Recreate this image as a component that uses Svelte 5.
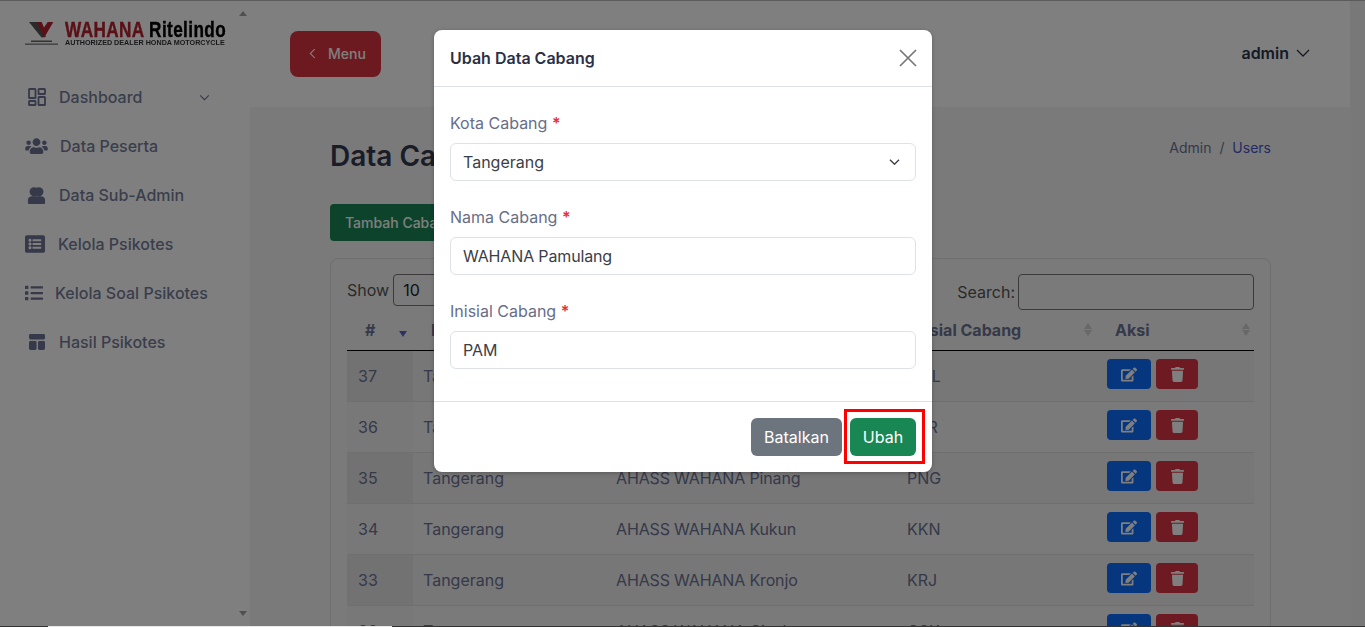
<script>
  const menu = [
    { label: 'Dashboard', icon: 'dash', gap: 'g1' },
    { label: 'Data Peserta', icon: 'users', gap: 'g2' },
    { label: 'Data Sub-Admin', icon: 'sub', gap: 'g1' },
    { label: 'Kelola Psikotes', icon: 'alt', gap: 'g3' },
    { label: 'Kelola Soal Psikotes', icon: 'list', gap: 'g4' },
    { label: 'Hasil Psikotes', icon: 'table', gap: 'g1' }
  ];
  const rows = [
    [37, 'Tangerang', 'AHASS WAHANA Pamulang', 'PML'],
    [36, 'Tangerang', 'AHASS WAHANA Serpong', 'SPR'],
    [35, 'Tangerang', 'AHASS WAHANA Pinang', 'PNG'],
    [34, 'Tangerang', 'AHASS WAHANA Kukun', 'KKN'],
    [33, 'Tangerang', 'AHASS WAHANA Kronjo', 'KRJ'],
    [32, 'Tangerang', 'AHASS WAHANA Cisoka', 'CSK']
  ];
  const heads = ['#', 'Kota Cabang', 'Nama Cabang', 'Inisial Cabang', 'Aksi'];
</script>

<div class="page">
  <aside class="sidebar">
    <div class="side-inner">
      <div class="logo">
        <svg class="logo-mark" viewBox="0 0 33 25" aria-hidden="true">
          <path d="M4 1h9l8 15-4.500 .5z" fill="#555" />
          <path d="M11.700 1h5l2.300 5.500 3.700-5.500h5.600l-9 15.500z" fill="#b3202c" />
          <rect x="6" y="19.500" width="21" height="1.500" fill="#666" />
          <rect x="0" y="22.500" width="33" height="1.300" fill="#777" />
        </svg>
        <div class="logo-text">
          <div class="logo-name"><span class="red">WAHANA</span> <span>Ritelindo</span></div>
          <div class="logo-sub">AUTHORIZED DEALER HONDA MOTORCYCLE</div>
        </div>
      </div>
      <nav class="menu">
        {#each menu as m}
          <div class="item {m.gap}">
            <span class="ico">
              {#if m.icon === 'dash'}
                <svg viewBox="0 0 18 18" width="18" height="18" fill="none" stroke="currentColor" stroke-width="1.800"><rect x="1" y="1" width="6.500" height="9" rx=".6"/><rect x="10.500" y="1" width="6.500" height="5" rx=".6"/><rect x="1" y="13" width="6.500" height="4" rx=".6"/><rect x="10.500" y="9" width="6.500" height="8" rx=".6"/></svg>
              {:else if m.icon === 'users'}
                <svg viewBox="0 0 640 512" width="23" height="18" fill="currentColor"><path d="M96 224c35.3 0 64-28.7 64-64s-28.7-64-64-64-64 28.7-64 64 28.7 64 64 64zm448 0c35.3 0 64-28.7 64-64s-28.7-64-64-64-64 28.7-64 64 28.7 64 64 64zm32 32h-64c-17.6 0-33.5 7.1-45.1 18.6 40.3 22.1 68.9 62 75.1 109.4h66c17.7 0 32-14.3 32-32v-32c0-35.3-28.7-64-64-64zm-256 0c61.9 0 112-50.1 112-112S381.9 32 320 32 208 82.1 208 144s50.1 112 112 112zm76.8 32h-8.3c-20.8 10-43.9 16-68.5 16s-47.6-6-68.5-16h-8.3C179.6 288 128 339.6 128 403.2V432c0 26.5 21.5 48 48 48h288c26.5 0 48-21.5 48-48v-28.8c0-63.6-51.6-115.2-115.2-115.2zm-223.7-13.4C161.5 263.1 145.6 256 128 256H64c-35.3 0-64 28.7-64 64v32c0 17.7 14.3 32 32 32h65.9c6.3-47.4 34.9-87.3 75.2-109.4z"/></svg>
              {:else if m.icon === 'sub'}
                <svg viewBox="0 0 20 20" width="19" height="19" fill="currentColor"><circle cx="7.500" cy="6" r="4.800"/><circle cx="12.500" cy="6" r="4.800"/><path d="M1 18v-3.500c0-2.400 2-3.800 4.400-3.800h9.200c2.400 0 4.400 1.400 4.400 3.800v3.500c0 .6-.4 1-1 1H2c-.6 0-1-.4-1-1z"/></svg>
              {:else if m.icon === 'alt'}
                <svg viewBox="0 0 512 512" width="20" height="20" fill="currentColor"><path d="M464 480H48c-26.51 0-48-21.49-48-48V80c0-26.51 21.49-48 48-48h416c26.51 0 48 21.49 48 48v352c0 26.51-21.49 48-48 48zM128 120c-22.091 0-40 17.909-40 40s17.909 40 40 40 40-17.909 40-40-17.909-40-40-40zm0 96c-22.091 0-40 17.909-40 40s17.909 40 40 40 40-17.909 40-40-17.909-40-40-40zm0 96c-22.091 0-40 17.909-40 40s17.909 40 40 40 40-17.909 40-40-17.909-40-40-40zm288-136v-32c0-6.627-5.373-12-12-12H204c-6.627 0-12 5.373-12 12v32c0 6.627 5.373 12 12 12h200c6.627 0 12-5.373 12-12zm0 96v-32c0-6.627-5.373-12-12-12H204c-6.627 0-12 5.373-12 12v32c0 6.627 5.373 12 12 12h200c6.627 0 12-5.373 12-12zm0 96v-32c0-6.627-5.373-12-12-12H204c-6.627 0-12 5.373-12 12v32c0 6.627 5.373 12 12 12h200c6.627 0 12-5.373 12-12z"/></svg>
              {:else if m.icon === 'list'}
                <svg viewBox="0 0 512 512" width="18" height="18" fill="currentColor"><path d="M80 368H16a16 16 0 0 0-16 16v64a16 16 0 0 0 16 16h64a16 16 0 0 0 16-16v-64a16 16 0 0 0-16-16zm0-320H16A16 16 0 0 0 0 64v64a16 16 0 0 0 16 16h64a16 16 0 0 0 16-16V64a16 16 0 0 0-16-16zm0 160H16a16 16 0 0 0-16 16v64a16 16 0 0 0 16 16h64a16 16 0 0 0 16-16v-64a16 16 0 0 0-16-16zm416 176H176a16 16 0 0 0-16 16v32a16 16 0 0 0 16 16h320a16 16 0 0 0 16-16v-32a16 16 0 0 0-16-16zm0-320H176a16 16 0 0 0-16 16v32a16 16 0 0 0 16 16h320a16 16 0 0 0 16-16V80a16 16 0 0 0-16-16zm0 160H176a16 16 0 0 0-16 16v32a16 16 0 0 0 16 16h320a16 16 0 0 0 16-16v-32a16 16 0 0 0-16-16z"/></svg>
              {:else}
                <svg viewBox="0 0 18 18" width="18" height="18" fill="currentColor"><rect x="1" y="1" width="16" height="5.500" rx="1.400"/><rect x="1" y="8" width="7.600" height="9" rx="1.400"/><rect x="10" y="8" width="7" height="9" rx="1.400"/></svg>
              {/if}
            </span>
            <span class="label">{m.label}</span>
            {#if m.icon === 'dash'}
              <svg class="caret" viewBox="0 0 12 8" width="11" height="7" fill="none" stroke="currentColor" stroke-width="1.200"><path d="M1 1.500l5 5 5-5"/></svg>
            {/if}
          </div>
        {/each}
      </nav>
    </div>
    <div class="side-scroll">
      <span class="arrow up"></span>
      <span class="arrow down"></span>
    </div>
  </aside>

  <main class="main">
    <header class="topbar">
      <button class="menu-btn">
        <svg viewBox="0 0 8 12" width="7" height="11" fill="none" stroke="currentColor" stroke-width="1.300"><path d="M6.500 1L1.500 6l5 5"/></svg>
        Menu
      </button>
      <div class="user">
        admin
        <svg viewBox="0 0 14 8" width="14" height="8" fill="none" stroke="currentColor" stroke-width="1.300"><path d="M1 1l6 6 6-6"/></svg>
      </div>
    </header>

    <section class="content">
      <div class="title-row">
        <h1>Data Cabang</h1>
        <div class="crumbs">Admin <span class="sep">/</span> <span class="cur">Users</span></div>
      </div>
      <button class="add-btn">Tambah Cabang</button>
      <div class="card">
        <div class="tools">
          <div class="show">Show <span class="len">10</span></div>
          <div class="search">Search: <span class="search-box"></span></div>
        </div>
        <table>
          <thead>
            <tr>
              {#each heads as h, i}
                <th class="c{i}">
                  {h}
                  <span class="sort">
                    {#if i === 0}
                      <i class="tri-down on"></i>
                    {:else}
                      <i class="tri-up"></i><i class="tri-down"></i>
                    {/if}
                  </span>
                </th>
              {/each}
            </tr>
          </thead>
          <tbody>
            {#each rows as r, i}
              <tr class:odd={i % 2 === 0}>
                <td class="idx">{r[0]}</td>
                <td>{r[1]}</td>
                <td class="tight">{r[2]}</td>
                <td>{r[3]}</td>
                <td>
                  <div class="acts">
                    <span class="act blue">
                      <svg viewBox="0 0 576 512" width="16" height="15" fill="currentColor"><path d="M402.6 83.2l90.2 90.2c3.8 3.8 3.8 10 0 13.8L274.4 405.6l-92.8 10.3c-12.4 1.4-22.9-9.1-21.5-21.5l10.3-92.8L388.8 83.2c3.8-3.8 10-3.8 13.8 0zm162-22.9l-48.8-48.8c-15.2-15.2-39.9-15.2-55.2 0l-35.4 35.4c-3.8 3.8-3.8 10 0 13.8l90.2 90.2c3.8 3.8 10 3.8 13.8 0l35.4-35.4c15.2-15.3 15.2-40 0-55.2zM384 346.2V448H64V128h229.8c3.2 0 6.2-1.3 8.5-3.5l40-40c7.6-7.6 2.2-20.5-8.5-20.5H48C21.5 64 0 85.5 0 112v352c0 26.5 21.5 48 48 48h352c26.5 0 48-21.5 48-48V306.2c0-10.7-12.9-16-20.5-8.5l-40 40c-2.2 2.3-3.5 5.3-3.5 8.5z"/></svg>
                    </span>
                    <span class="act red">
                      <svg viewBox="0 0 448 512" width="13" height="15" fill="currentColor"><path d="M432 32H312l-9.4-18.7A24 24 0 0 0 281.1 0H166.8a23.72 23.72 0 0 0-21.4 13.3L136 32H16A16 16 0 0 0 0 48v32a16 16 0 0 0 16 16h416a16 16 0 0 0 16-16V48a16 16 0 0 0-16-16zM53.2 467a48 48 0 0 0 47.9 45h245.8a48 48 0 0 0 47.9-45L416 128H32z"/></svg>
                    </span>
                  </div>
                </td>
              </tr>
            {/each}
          </tbody>
        </table>
      </div>
    </section>
  </main>
  <div class="page-scroll"></div>

  <div class="backdrop"></div>
  <div class="edge-top"></div>
  <div class="edge-bottom"><span class="edge-light"></span></div>
  <div class="modal">
    <div class="m-head">
      <h2>Ubah Data Cabang</h2>
      <svg class="close" viewBox="0 0 18 18" width="18" height="18" fill="none" stroke="currentColor" stroke-width="1.700"><path d="M1 1l16 16M17 1L1 17"/></svg>
    </div>
    <div class="m-body">
      <div class="field">
        <div class="lab">Kota Cabang <span class="req">*</span></div>
        <div class="input select">
          Tangerang
          <svg viewBox="0 0 14 8" width="11" height="6" fill="none" stroke="currentColor" stroke-width="1.800"><path d="M1 1l6 6 6-6"/></svg>
        </div>
      </div>
      <div class="field">
        <div class="lab">Nama Cabang <span class="req">*</span></div>
        <div class="input tight">WAHANA Pamulang</div>
      </div>
      <div class="field">
        <div class="lab">Inisial Cabang <span class="req">*</span></div>
        <div class="input">PAM</div>
      </div>
    </div>
    <div class="m-foot">
      <button class="btn grey">Batalkan</button>
      <div class="ubah-wrap">
        <button class="btn green">Ubah</button>
        <span class="mark"></span>
      </div>
    </div>
  </div>
</div>

<style>
  :global(body) {
    margin: 0;
    overflow: hidden;
    background: #f4f4f4;
  }
  .page {
    display: flex;
    height: 627px;
    width: 1365px;
    overflow: hidden;
    position: relative;
    font-family: Inter, "Liberation Sans", sans-serif;
    font-size: 16px;
    color: #6c7293;
  }
  .sidebar {
    width: 250px;
    flex: none;
    display: flex;
    background: #fff;
  }
  .side-inner {
    width: 235px;
    flex: none;
  }
  .side-scroll {
    width: 15px;
    display: flex;
    flex-direction: column;
    justify-content: space-between;
    align-items: center;
    padding: 11px 0;
    box-sizing: border-box;
  }
  .arrow {
    width: 0;
    height: 0;
    border-left: 4.500px solid transparent;
    border-right: 4.500px solid transparent;
  }
  .arrow.up { border-bottom: 5px solid #a0a0a0; }
  .arrow.down { border-top: 5px solid #a0a0a0; }
  .logo {
    display: flex;
    gap: 7px;
    padding: 21px 0 0 25px;
    height: 33px;
    align-items: flex-start;
  }
  .logo-mark {
    width: 33px;
    height: 25px;
    flex: none;
    filter: blur(.3px);
  }
  .logo-text {
    filter: blur(.3px);
    width: 160px;
  }
  .logo-name {
    font-family: "Liberation Sans", sans-serif;
    font-weight: 700;
    font-size: 22px;
    line-height: 18px;
    color: #000;
    white-space: nowrap;
    transform: scaleX(.78);
    transform-origin: 0 0;
    letter-spacing: .5px;
    -webkit-text-stroke: .4px currentColor;
  }
  .red { color: #b3202c; }
  .logo-sub {
    font-family: "Liberation Sans", sans-serif;
    font-size: 7.200px;
    line-height: 7px;
    font-weight: 700;
    color: #333;
    white-space: nowrap;
  }
  .menu {
    margin-top: 33px;
    display: flex;
    flex-direction: column;
    gap: 29px;
    padding-left: 25px;
  }
  .item {
    display: flex;
    align-items: center;
    height: 20px;
    white-space: nowrap;
    font-weight: 500;
    color: #757d98;
  }
  .ico {
    display: flex;
    align-items: center;
    justify-content: center;
    color: #6c7293;
    width: 23px;
  }
  .g1 .label { margin-left: 11px; }
  .g2 .label { margin-left: 12px; }
  .g3 .label { margin-left: 10px; }
  .g4 .label { margin-left: 7px; }
  .g3 .ico svg { margin-right: 3px; }
  .g4 .ico svg { margin-right: 5px; }
  .caret {
    margin-left: 57px;
    color: #6c7293;
  }
  .main {
    flex: none;
    width: 1100px;
    background: #f4f5f5;
    min-width: 0;
  }
  .page-scroll {
    width: 15px;
    flex: none;
    background: #f1f1f1;
  }
  .topbar {
    height: 107px;
    background: #fff;
    display: flex;
    justify-content: space-between;
    padding: 0 40px 0 40px;
    box-sizing: border-box;
  }
  .menu-btn {
    width: 91px;
    height: 46px;
    border: 0;
    border-radius: 8px;
    background: #d9343f;
    color: #fff;
    font: 500 14px Inter, sans-serif;
    display: flex;
    align-items: center;
    gap: 12px;
    padding: 0 0 2px 19px;
    margin-top: 31px;
  }
  .user {
    display: flex;
    align-items: center;
    gap: 7px;
    font-weight: 600;
    color: #2f3446;
    align-self: flex-start;
    margin-top: 43px;
  }
  .content {
    padding: 0 79px 0 80px;
  }
  .title-row {
    display: flex;
    justify-content: space-between;
    align-items: center;
    padding-top: 30px;
    height: 38px;
  }
  h1 {
    margin: 0;
    font-size: 28px;
    font-weight: 600;
    color: #343a50;
    line-height: 38px;
  }
  .crumbs {
    font-size: 14px;
    color: #6c7293;
    font-weight: 400;
    margin-bottom: 18px;
  }
  .sep { margin: 0 4px; }
  .cur { color: #4a55c8; }
  .add-btn {
    display: block;
    margin-top: 29px;
    width: 150px;
    height: 37px;
    border: 0;
    border-radius: 4px;
    background: #198754;
    color: #fff;
    font: 500 14px Inter, sans-serif;
    padding: 0 15px;
    text-align: left;
  }
  .card {
    margin-top: 17px;
    border: 1px solid #dcdcdc;
    border-radius: 8px;
    padding: 15px 16px 0;
    height: 500px;
    box-sizing: border-box;
  }
  .tools {
    display: flex;
    justify-content: space-between;
    align-items: center;
    height: 36px;
  }
  .show, .search {
    display: flex;
    align-items: center;
    color: #555;
  }
  .show { gap: 4px; margin-top: -4px; }
  .len {
    border: 1px solid #777;
    border-radius: 4px;
    width: 80px;
    height: 32px;
    box-sizing: border-box;
    display: flex;
    align-items: center;
    padding-left: 9px;
    color: #212529;
  }
  .search { gap: 3px; }
  .search-box {
    width: 236px;
    height: 36px;
    border: 1px solid #777;
    border-radius: 4px;
    box-sizing: border-box;
  }
  table {
    width: 907px;
    border-collapse: collapse;
    table-layout: fixed;
  }
  th {
    height: 40px;
    padding: 0 0 0 11px;
    text-align: left;
    font-weight: 700;
    color: #6c7293;
    position: relative;
    border-bottom: 1px solid #000;
    box-sizing: border-box;
  }
  th.c0 { width: 66px; padding-left: 18px; }
  th.c1 { width: 193px; padding-left: 18px; }
  th.c2 { width: 291px; padding-left: 10px; }
  th.c3 { width: 199px; padding-left: 14px; }
  th.c4 { padding-left: 19px; }
  .sort {
    position: absolute;
    right: 4px;
    top: 13px;
    display: flex;
    flex-direction: column;
    gap: 1px;
  }
  .tri-up, .tri-down {
    display: block;
    width: 0;
    height: 0;
    border-left: 4.500px solid transparent;
    border-right: 4.500px solid transparent;
  }
  .tri-up { border-bottom: 6.500px solid #d0d0d0; }
  .tri-down { border-top: 6.500px solid #d0d0d0; }
  .tri-down.on { border-top-color: #5f62c8; margin-top: 8px; }
  .c0 .sort { right: 6px; }
  td {
    height: 51px;
    padding: 0 0 0 10px;
    box-sizing: border-box;
    border-bottom: 1px solid #dedede;
    color: #6c7293;
  }
  td:first-child { padding-left: 11px; }
  .tight { letter-spacing: -.15px; }
  tr.odd td { background: #eeeeee; }
  tr td.idx { background: #f0f0f0; }
  tr.odd td.idx { background: #e5e5e5; }
  .acts { display: flex; gap: 5px; padding-left: 1px; }
  .act {
    height: 30px;
    border-radius: 4px;
    display: flex;
    align-items: center;
    justify-content: center;
    color: #fff;
    box-sizing: border-box;
    margin-top: -3px;
  }
  .blue { width: 44px; background: #0d6efd; }
  .red.act { width: 42px; background: #dc3545; color: #fff; }
  .backdrop {
    position: absolute;
    inset: 0;
    background: rgba(0, 0, 0, .5);
  }
  .edge-top {
    position: absolute;
    left: 0;
    right: 0;
    top: 0;
    height: 1px;
    background: #5c5c5c;
  }
  .edge-bottom {
    position: absolute;
    left: 0;
    right: 0;
    bottom: 0;
    height: 1px;
    background: #333;
  }
  .edge-light {
    display: block;
    margin-left: 48px;
    width: 344px;
    height: 1px;
    background: #e8e8e8;
  }
  .modal {
    position: absolute;
    left: 434px;
    top: 30px;
    width: 498px;
    height: 442px;
    background: #fff;
    border-radius: 8px;
    display: flex;
    flex-direction: column;
    box-shadow: 0 1px 4px rgba(0,0,0,.25);
  }
  .m-head {
    height: 57px;
    flex: none;
    box-sizing: border-box;
    border-bottom: 1px solid #dee2e6;
    display: flex;
    align-items: center;
    justify-content: space-between;
    padding: 0 15px 0 16px;
  }
  h2 {
    margin: 0;
    font-size: 16px;
    font-weight: 600;
    color: #2a3047;
  }
  .close { color: #777; margin-bottom: 1px; }
  .m-body {
    flex: 1;
    padding: 24px 16px 0;
    display: flex;
    flex-direction: column;
    gap: 24px;
  }
  .lab {
    height: 24px;
    line-height: 24px;
    margin-bottom: 8px;
    color: #676e88;
  }
  .req { color: #e8303a; font-weight: 600; }
  .input {
    height: 38px;
    box-sizing: border-box;
    border: 1px solid #dee2e6;
    border-radius: 6px;
    padding: 0 12px;
    display: flex;
    align-items: center;
    color: #3b4048;
  }
  .select { justify-content: space-between; padding-right: 15px; }
  .m-foot {
    height: 71px;
    flex: none;
    box-sizing: border-box;
    border-top: 1px solid #dee2e6;
    display: flex;
    justify-content: flex-end;
    align-items: center;
    gap: 8px;
    padding: 0 16px;
  }
  .btn {
    height: 38px;
    border: 0;
    border-radius: 6px;
    color: #fff;
    font: 400 16px Inter, sans-serif;
    padding: 0;
  }
  .grey { width: 91px; background: #6c757d; }
  .green { width: 66px; background: #198754; display: block; }
  .ubah-wrap { position: relative; }
  .mark {
    position: absolute;
    left: -6px;
    top: -9px;
    width: 81px;
    height: 55px;
    box-sizing: border-box;
    border: 3px solid #f00;
    pointer-events: none;
  }
</style>
